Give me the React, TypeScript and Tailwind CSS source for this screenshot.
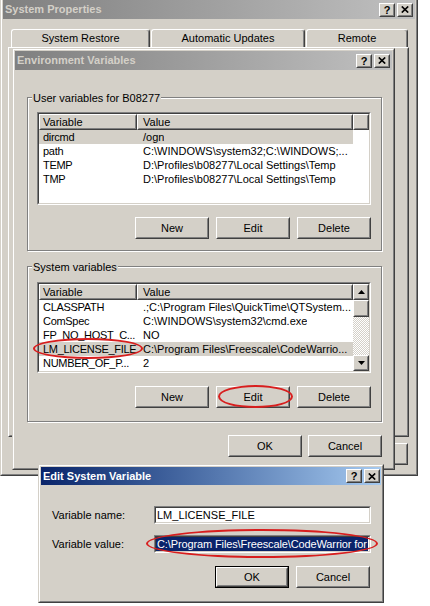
import React from "react";

const raisedOuter = "border border-t-white border-l-white border-r-[#404040] border-b-[#404040]";
const raisedInner = "border border-t-[#d4d0c8] border-l-[#d4d0c8] border-r-[#808080] border-b-[#808080]";
const sunkenOuter = "border border-t-[#808080] border-l-[#808080] border-r-white border-b-white";
const sunkenInner = "border border-t-[#404040] border-l-[#404040] border-r-[#d4d0c8] border-b-[#d4d0c8]";

function Btn({ label, def = false }: { label: string; def?: boolean }) {
  const core = (
    <div className={`${raisedOuter} h-full w-full bg-[#d4d0c8]`}>
      <div className={`${raisedInner} h-full w-full flex items-center justify-center`}>{label}</div>
    </div>
  );
  return def ? (
    <div className="w-[74px] h-[22px] border border-black shrink-0">{core}</div>
  ) : (
    <div className="w-[74px] h-[22px] shrink-0">{core}</div>
  );
}

function TitleBtn({ children }: { children: React.ReactNode }) {
  return (
    <div className={`w-[16px] h-[14px] ${raisedOuter} bg-[#d4d0c8] shrink-0`}>
      <div className={`${raisedInner} w-full h-full flex items-center justify-center`}>{children}</div>
    </div>
  );
}

function XGlyph() {
  return (
    <svg width="8" height="7" viewBox="0 0 8 7">
      <path d="M0.8 0.5 L7.2 6.5 M7.2 0.5 L0.8 6.5" stroke="#000" strokeWidth="1.7" />
    </svg>
  );
}

function TitleBar({ title, active, h, pr }: { title: string; active?: boolean; h: string; pr: string }) {
  const bg = active
    ? "bg-linear-to-r from-[#0a246a] to-[#a6caf0] text-white"
    : "bg-linear-to-r from-[#808080] to-[#c0c0c0] text-[#d4d0c8]";
  return (
    <div className={`${h} ${bg} ${pr} flex items-center shrink-0`}>
      <span className="pl-[2px] font-bold text-[11px] whitespace-nowrap">{title}</span>
      <div className="ml-auto flex gap-[2px] items-center">
        <TitleBtn>
          <span className="font-bold text-[11px] leading-[10px] text-black">?</span>
        </TitleBtn>
        <TitleBtn>
          <XGlyph />
        </TitleBtn>
      </div>
    </div>
  );
}

function Frame({ className, children }: { className: string; children: React.ReactNode }) {
  return (
    <div
      className={`absolute ${className} border border-t-[#d4d0c8] border-l-[#d4d0c8] border-r-[#404040] border-b-[#404040] bg-[#d4d0c8]`}
    >
      <div className="w-full h-full border border-t-white border-l-white border-r-[#808080] border-b-[#808080] p-[1px] flex flex-col">
        {children}
      </div>
    </div>
  );
}

function Tab({ w, children }: { w: string; children: React.ReactNode }) {
  return (
    <div
      className={`${w} h-[18px] border-t border-l border-r border-t-white border-l-white border-r-[#404040] rounded-t-[3px] shadow-[inset_-1px_0_0_#808080] flex items-center justify-center`}
    >
      {children}
    </div>
  );
}

function HeadCell({ w, pl, children }: { w: string; pl: string; children?: React.ReactNode }) {
  return (
    <div className={`${w} h-[16px] shrink-0 ${raisedOuter} bg-[#d4d0c8]`}>
      <div className={`${raisedInner} h-full flex items-center ${pl}`}>{children}</div>
    </div>
  );
}

function Rows({ rows, sel }: { rows: string[][]; sel: number }) {
  return (
    <>
      {rows.map((r, i) => (
        <div key={i} className={`h-[14px] w-[314px] flex items-center shrink-0 ${i === sel ? "bg-[#d4d0c8]" : ""}`}>
          <div className="w-[98px] pl-[4px] whitespace-nowrap overflow-hidden shrink-0 tracking-[-0.3px]">{r[0]}</div>
          <div className="pl-[6px] whitespace-nowrap overflow-hidden">{r[1]}</div>
        </div>
      ))}
    </>
  );
}

function Arrow({ up }: { up?: boolean }) {
  return (
    <div className={`w-[16px] h-[16px] ${raisedOuter} bg-[#d4d0c8] shrink-0`}>
      <div className={`${raisedInner} w-full h-full flex items-center justify-center`}>
        <svg width="7" height="4" viewBox="0 0 7 4">
          <path d={up ? "M3.5 0 L7 4 L0 4Z" : "M0 0 L7 0 L3.5 4Z"} fill="#000" />
        </svg>
      </div>
    </div>
  );
}

function GroupBox({
  label,
  box,
  children,
}: {
  label: string;
  box: string;
  children: React.ReactNode;
}) {
  return (
    <div
      className={`relative w-[355px] border border-[#808080] shadow-[inset_1px_1px_0_#ffffff,1px_1px_0_#ffffff] pl-[9px] ${box}`}
    >
      <span className="absolute left-[4px] top-[-6px] bg-[#d4d0c8] px-[1px] leading-[13px]">{label}</span>
      {children}
    </div>
  );
}

const userRows = [
  ["dircmd", "/ogn"],
  ["path", "C:\\WINDOWS\\system32;C:\\WINDOWS;..."],
  ["TEMP", "D:\\Profiles\\b08277\\Local Settings\\Temp"],
  ["TMP", "D:\\Profiles\\b08277\\Local Settings\\Temp"],
];

const sysRows = [
  ["CLASSPATH", ".;C:\\Program Files\\QuickTime\\QTSystem..."],
  ["ComSpec", "C:\\WINDOWS\\system32\\cmd.exe"],
  ["FP_NO_HOST_C...", "NO"],
  ["LM_LICENSE_FILE", "C:\\Program Files\\Freescale\\CodeWarrio..."],
  ["NUMBER_OF_P...", "2"],
];

export default function App() {
  return (
    <div className="relative w-[430px] h-[606px] bg-white overflow-hidden text-[11px] leading-[13px] text-black [font-family:'Liberation_Sans',Arial,sans-serif]">
      {/* System Properties */}
      <Frame className="left-0 top-[-3px] w-[418px] h-[479px]">
        <TitleBar title="System Properties" h="h-[19px]" pr="pr-[2px]" />
        <div className="flex ml-[8px] mt-[10px] gap-[1px]">
          <Tab w="w-[139px]">System Restore</Tab>
          <Tab w="w-[154px]">Automatic Updates</Tab>
          <Tab w="w-[102px]">Remote</Tab>
        </div>
        <div className="ml-[5px] w-[401px] h-[390px] border border-t-white border-l-white border-r-[#404040] border-b-[#404040] shrink-0">
          <div className="w-full h-full border border-t-transparent border-l-transparent border-r-[#808080] border-b-[#808080]" />
        </div>
        <div className="flex justify-end gap-[6px] mt-[6px] w-[405px]">
          <Btn label="OK" />
          <Btn label="Cancel" />
          <Btn label="Apply" />
        </div>
      </Frame>

      {/* Environment Variables */}
      <Frame className="left-[12px] top-[48px] w-[383px] h-[422px]">
        <TitleBar title="Environment Variables" h="h-[19px]" pr="pr-[2px]" />
        <div className="pl-[12px] pt-[27px] flex flex-col">
          <GroupBox label="User variables for B08277" box="h-[154px] pt-[14px]">
            <div className={`w-[334px] h-[93px] ${sunkenOuter}`}>
              <div className={`h-full ${sunkenInner} bg-white flex flex-col overflow-hidden`}>
                <div className="flex shrink-0">
                  <HeadCell w="w-[98px]" pl="pl-[2px]">Variable</HeadCell>
                  <HeadCell w="w-[216px]" pl="pl-[4px]">Value</HeadCell>
                  <HeadCell w="flex-1" pl="pl-0" />
                </div>
                <Rows rows={userRows} sel={0} />
              </div>
            </div>
            <div className="flex justify-end gap-[7px] w-[334px] mt-[12px]">
              <Btn label="New" />
              <Btn label="Edit" />
              <Btn label="Delete" />
            </div>
          </GroupBox>

          <GroupBox label="System variables" box="h-[156px] pt-[15px] mt-[15px]">
            <div className={`w-[334px] h-[91px] ${sunkenOuter}`}>
              <div className={`h-full ${sunkenInner} bg-white flex overflow-hidden`}>
                <div className="w-[314px] flex flex-col overflow-hidden">
                  <div className="flex shrink-0">
                    <HeadCell w="w-[98px]" pl="pl-[2px]">Variable</HeadCell>
                    <HeadCell w="w-[216px]" pl="pl-[4px]">Value</HeadCell>
                  </div>
                  <Rows rows={sysRows} sel={3} />
                </div>
                <div className="w-[16px] h-full flex flex-col">
                  <Arrow up />
                  <div className={`w-[16px] h-[17px] ${raisedOuter} bg-[#d4d0c8] shrink-0`}>
                    <div className={`${raisedInner} w-full h-full`} />
                  </div>
                  <div className="flex-1 bg-[image:repeating-conic-gradient(#d4d0c8_0%_25%,#ffffff_0%_50%)] bg-[length:2px_2px]" />
                  <Arrow />
                </div>
              </div>
            </div>
            <div className="flex justify-end gap-[7px] w-[334px] mt-[13px]">
              <Btn label="New" />
              <Btn label="Edit" />
              <Btn label="Delete" />
            </div>
          </GroupBox>

          <div className="flex justify-end gap-[6px] w-[355px] mt-[13px]">
            <Btn label="OK" />
            <Btn label="Cancel" />
          </div>
        </div>
      </Frame>

      {/* Edit System Variable */}
      <Frame className="left-[38px] top-[464px] w-[346px] h-[139px]">
        <TitleBar title="Edit System Variable" active h="h-[18px]" pr="pr-[1px]" />
        <div className="pl-[11px] pt-[21px] flex flex-col">
          <div className="flex items-center h-[18px]">
            <div className="w-[102px] shrink-0">Variable name:</div>
            <div className={`w-[217px] h-[18px] ${sunkenOuter}`}>
              <div className={`h-full ${sunkenInner} bg-white flex items-center pl-[1px] whitespace-nowrap overflow-hidden`}>
                LM_LICENSE_FILE
              </div>
            </div>
          </div>
          <div className="flex items-center h-[18px] mt-[11px]">
            <div className="w-[102px] shrink-0">Variable value:</div>
            <div className={`w-[217px] h-[18px] ${sunkenOuter}`}>
              <div className={`h-full ${sunkenInner} bg-white flex items-center overflow-hidden`}>
                <span className="h-full w-[212px] shrink-0 bg-[#0a246a] text-white pl-[1px] flex items-center whitespace-nowrap tracking-[-0.12px]">
                  C:\Program Files\Freescale\CodeWarrior for
                </span>
              </div>
            </div>
          </div>
          <div className="flex justify-end gap-[7px] w-[318px] mt-[13px]">
            <Btn label="OK" def />
            <Btn label="Cancel" />
          </div>
        </div>
      </Frame>

      {/* red annotation ellipses */}
      <div className="absolute left-[33px] top-[338px] w-[110px] h-[21px] border-2 border-[#d81e1e] rounded-[50%]" />
      <div className="absolute left-[218px] top-[385px] w-[75px] h-[23px] border-2 border-[#d81e1e] rounded-[50%]" />
      <div className="absolute left-[146px] top-[529px] w-[232px] h-[29px] border-2 border-[#d81e1e] rounded-[50%]" />
    </div>
  );
}
